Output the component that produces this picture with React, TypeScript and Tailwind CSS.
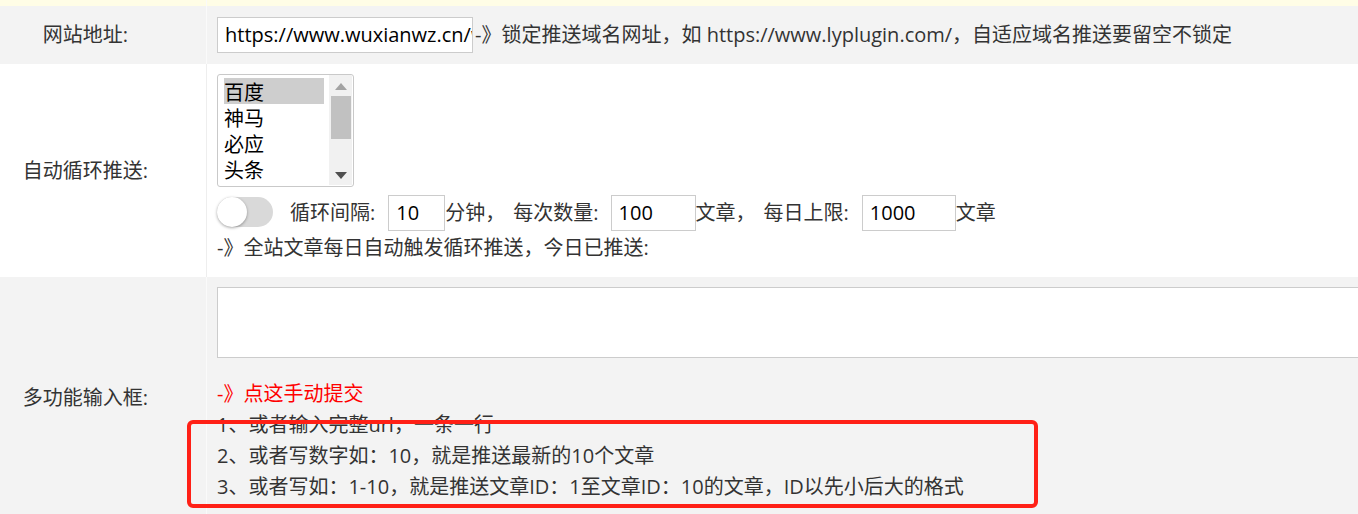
import React from 'react';

const font = { fontFamily: '"Open Sans", "Noto Sans CJK SC", sans-serif' };

const engines = ['百度', '神马', '必应', '头条'];

const TextBox = ({ value, width }: { value: string; width: string }) => (
  <div
    className={`${width} h-[36px] border border-[#cccccc] bg-white px-[7px] flex items-center text-black overflow-hidden whitespace-nowrap`}
  >
    {value}
  </div>
);

const EngineList = () => (
  <div className="w-[137px] h-[113px] border border-[#c9c9c9] rounded-[3px] bg-white flex pl-[6px] pt-[3px] pr-[1px] pb-[1px]">
    <div className="w-[100px] text-black">
      {engines.map((e, i) => (
        <div key={e} className={`h-[26px] leading-[26px] pt-[2px] ${i === 0 ? 'bg-[#cecece]' : ''}`}>
          {e}
        </div>
      ))}
    </div>
    <div className="ml-auto -mt-[3px] w-[23px] bg-[#f1f1f1] flex flex-col items-center">
      <svg width="12" height="7" viewBox="0 0 12 7" className="mt-[8px]">
        <path d="M6 0 L12 7 L0 7 Z" fill="#a3a3a3" />
      </svg>
      <div className="mt-[6px] w-[20px] h-[43px] bg-[#c1c1c1]" />
      <svg width="12" height="7" viewBox="0 0 12 7" className="mt-auto mb-[6px]">
        <path d="M0 0 L12 0 L6 7 Z" fill="#505050" />
      </svg>
    </div>
  </div>
);

const Toggle = () => (
  <div className="w-[56px] h-[30px] rounded-full bg-[#d9d9d9] flex items-center">
    <div className="w-[30px] h-[30px] rounded-full bg-white shadow-[0_1px_3px_rgba(0,0,0,0.35)]" />
  </div>
);

const Label = ({ text, gray }: { text: string; gray?: boolean }) => (
  <div
    className={`w-[207px] shrink-0 pr-[35px] text-center flex items-center justify-center border-r ${
      gray ? 'border-[#fafafa]' : 'border-[#eeeeee]'
    }`}
  >
    {text}
  </div>
);

export default function App() {
  return (
    <div className="w-full h-[514px] overflow-hidden bg-white text-[20px] text-[#333333]" style={font}>
      {/* top strip */}
      <div className="flex h-[6px] bg-[#fffde6]">
        <div className="w-[207px] border-r border-[#fafafa]" />
      </div>

      {/* 网站地址 */}
      <div className="flex bg-[#f3f3f3] h-[58px]">
        <Label text="网站地址:" gray />
        <div className="flex items-center pl-[10px] pb-[1px] whitespace-nowrap">
          <TextBox value="https://www.wuxianwz.cn/wordpress/" width="w-[256px]" />
          <span className="ml-[2px]">-》锁定推送域名网址，如 https://www.lyplugin.com/，自适应域名推送要留空不锁定</span>
        </div>
      </div>

      {/* 自动循环推送 */}
      <div className="flex bg-white h-[213px]">
        <Label text="自动循环推送:" />
        <div className="pl-[10px] pt-[10px] flex flex-col">
          <EngineList />
          <div className="flex items-center mt-[8px] h-[36px] whitespace-nowrap">
            <div className="mt-[-3px]">
              <Toggle />
            </div>
            <span className="ml-[17px]">循环间隔:</span>
            <div className="ml-[13px]">
              <TextBox value="10" width="w-[57px]" />
            </div>
            <span>分钟，</span>
            <span className="ml-[8px]">每次数量:</span>
            <div className="ml-[12px]">
              <TextBox value="100" width="w-[85px]" />
            </div>
            <span>文章，</span>
            <span className="ml-[8px]">每日上限:</span>
            <div className="ml-[13px]">
              <TextBox value="1000" width="w-[94px]" />
            </div>
            <span>文章</span>
          </div>
          <div className="mt-[2px] leading-[30px]">-》全站文章每日自动触发循环推送，今日已推送:</div>
        </div>
      </div>

      {/* 多功能输入框 */}
      <div className="relative flex bg-[#f3f3f3]">
        <Label text="多功能输入框:" gray />
        <div className="pl-[10px] pt-[10px] pb-[17px] flex flex-col min-w-0 flex-1 overflow-hidden">
          <div className="w-[1200px] h-[71px] border border-[#cccccc] bg-white shrink-0" />
          <div className="mt-[20px] leading-[31px] whitespace-nowrap">
            <div className="text-[#ff0000]">-》点这手动提交</div>
            <div>1、或者输入完整url，一条一行</div>
            <div>2、或者写数字如：10，就是推送最新的10个文章</div>
            <div>3、或者写如：1-10，就是推送文章ID：1至文章ID：10的文章，ID以先小后大的格式</div>
          </div>
        </div>
        <div className="absolute left-[187px] top-[143px] w-[851px] h-[88px] border-[4px] border-[#ff2016] rounded-[6px]" />
      </div>
    </div>
  );
}
